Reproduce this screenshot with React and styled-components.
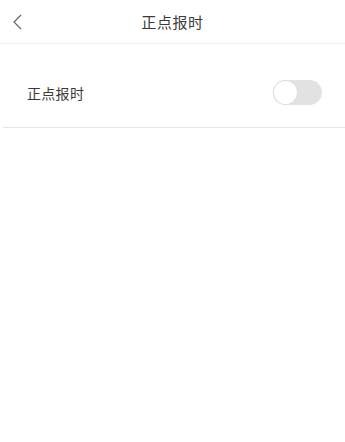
import React, { useState } from 'react';
import styled, { createGlobalStyle } from 'styled-components';

const GlobalStyle = createGlobalStyle`
  html, body {
    margin: 0;
    padding: 0;
    background: #ffffff;
  }
  body {
    font-family: "Noto Sans CJK SC", "Noto Sans", sans-serif;
  }
`;

const Page = styled.div`
  width: 345px;
  min-height: 442px;
  background: #ffffff;
`;

const Header = styled.div`
  height: 43px;
  display: flex;
  align-items: center;
  justify-content: center;
  position: relative;
  border-bottom: 1px solid #f0f0f0;
`;

const BackButton = styled.button`
  position: absolute;
  left: 9px;
  top: 12px;
  width: 16px;
  height: 20px;
  padding: 0;
  border: 0;
  background: none;
  display: flex;
  align-items: center;
  justify-content: center;
`;

const Title = styled.div`
  font-size: 15px;
  color: #3a3a3a;
  letter-spacing: 0.6px;
`;

const Row = styled.div`
  margin-top: 14px;
  margin-left: 3px;
  height: 69px;
  display: flex;
  align-items: center;
  justify-content: space-between;
  padding: 0 23px 0 24px;
  border-bottom: 1px solid #e6e6e6;
`;

const Label = styled.div`
  font-size: 14px;
  color: #3a3a3a;
  letter-spacing: 0.3px;
`;

const Track = styled.div`
  width: 49px;
  height: 25px;
  border-radius: 13px;
  background: ${p => (p.$on ? '#4cd964' : '#e2e2e2')};
  box-sizing: border-box;
  position: relative;
  cursor: pointer;
`;

const Knob = styled.div`
  position: absolute;
  top: 1px;
  left: ${p => (p.$on ? '25px' : '1px')};
  width: 23px;
  height: 23px;
  border-radius: 50%;
  background: #ffffff;
  box-shadow: 0 0 0 1px #dddddd;
`;

export default function App() {
  const [on, setOn] = useState(false);
  return (
    <Page>
      <GlobalStyle />
      <Header>
        <BackButton>
          <svg width="11" height="16" viewBox="0 0 11 16">
            <path d="M9 1 L2 8 L9 15" fill="none" stroke="#666" strokeWidth="1.2" />
          </svg>
        </BackButton>
        <Title>正点报时</Title>
      </Header>
      <Row>
        <Label>正点报时</Label>
        <Track $on={on} onClick={() => setOn(!on)}>
          <Knob $on={on} />
        </Track>
      </Row>
    </Page>
  );
}
